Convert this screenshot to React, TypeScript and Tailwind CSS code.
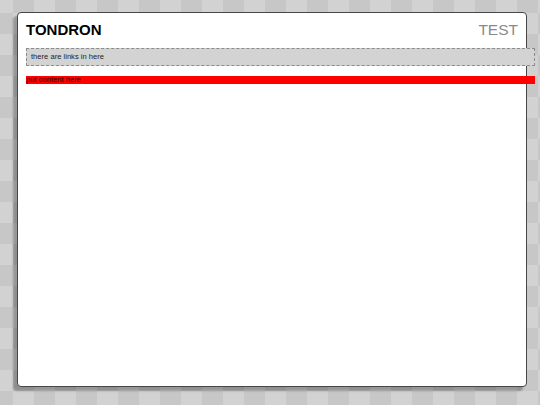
import React from 'react';

const App: React.FC = () => {
  return (
    <div
      className="h-[405px] w-full overflow-hidden pt-[12px] pl-[17px] pr-[13px] pb-[18px] bg-[image:conic-gradient(#c7c7c7_0_25%,#d2d2d2_0_50%,#c7c7c7_0_75%,#d2d2d2_0)] bg-[length:42px_42px] bg-[position:13px_13px]"
      style={{ fontFamily: '"Liberation Sans", Arial, sans-serif' }}
    >
      <div className="h-full w-full rounded-[4px] border border-[#474747] bg-white px-[8px] pt-[8px] shadow-[-4px_4px_2px_rgba(0,0,0,0.28)]">
        {/* Header */}
        <div className="flex items-center justify-between">
          <div className="text-[15px] leading-[17px] font-bold text-black">TONDRON</div>
          <div className="text-[15.5px] leading-[17px] text-[#8a8a8a]">TEST</div>
        </div>

        {/* Links */}
        <div className="mt-[10px] flex h-[18px] w-[509px] shrink-0 items-center border border-dashed border-[#8c8c8c] bg-[#d3d3d3] pl-[4px]">
          <span className="text-[7.6px] leading-[8px] text-[#222]">there are links in here</span>
        </div>

        {/* Content */}
        <div className="mt-[10px] flex h-[8px] w-[509px] shrink-0 items-center bg-[#ff0000]">
          <span className="text-[7.6px] leading-[8px] text-[#2a0000]">put content here</span>
        </div>
      </div>
    </div>
  );
};

export default App;
